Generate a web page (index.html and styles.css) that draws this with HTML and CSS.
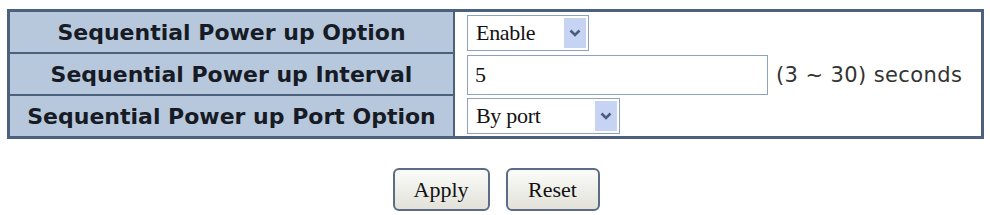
FILE: index.html
```
<!DOCTYPE html>
<html>
<head>
	<title>Sequential Power up</title>
	<link rel="stylesheet" href="styles.css">
</head>
<body>
	<!-- settings table -->
	<table class="config">
		<tr>
			<td class="label">Sequential Power up Option</td>
			<td class="value">
				<div class="combo combo-short">
					<span class="combo-text">Enable</span>
					<span class="combo-btn"><svg width="12" height="8" viewBox="0 0 12 8"><path d="M1.5 1.5 L6 6 L10.5 1.5" fill="none" stroke="#4a5d80" stroke-width="2.6"/></svg></span>
				</div>
			</td>
		</tr>
		<tr>
			<td class="label">Sequential Power up Interval</td>
			<td class="value">
				<div class="interval">
					<div class="textbox">5</div>
					<span class="unit">(3 ~ 30) seconds</span>
				</div>
			</td>
		</tr>
		<tr>
			<td class="label last">Sequential Power up Port Option</td>
			<td class="value">
				<div class="combo combo-long">
					<span class="combo-text">By port</span>
					<span class="combo-btn"><svg width="12" height="8" viewBox="0 0 12 8"><path d="M1.5 1.5 L6 6 L10.5 1.5" fill="none" stroke="#4a5d80" stroke-width="2.6"/></svg></span>
				</div>
			</td>
		</tr>
	</table>

	<!-- buttons -->
	<div class="actions">
		<button class="btn btn-apply">Apply</button>
		<button class="btn btn-reset">Reset</button>
	</div>
</body>
</html>
```

FILE: styles.css
```
body {
	margin: 0;
	background-color: white;
}

/* styles for the settings table */
.config {
	margin: 9px 6px 0 7px;
	width: 977px;
	border: 3px solid #4b617d;
	border-collapse: separate;
	border-spacing: 0;
}

.config td {
	padding: 0;
	height: 40px;
}

.label {
	width: 443px;
	background-color: #b8c8dc;
	border-right: 2px solid #4b617d;
	border-bottom: 2px solid #4b617d;
	text-align: center;
	font-family: "DejaVu Sans", Verdana, sans-serif;
	font-weight: bold;
	font-size: 22px;
	color: #161b26;
}

.label.last {
	border-bottom: none;
}

.value {
	padding-left: 12px !important;
	background-color: white;
}

/* fake drop down lists */
.combo {
	display: flex;
	align-items: stretch;
	height: 36px;
	border: 1px solid #8da2bd;
	box-sizing: border-box;
	padding: 2px;
	background-color: white;
}

.combo-short {
	width: 122px;
}

.combo-long {
	width: 153px;
}

.combo-text {
	flex: 1;
	display: flex;
	align-items: center;
	padding-left: 6px;
	font-family: "Liberation Serif", "Times New Roman", serif;
	font-size: 22px;
	letter-spacing: -0.3px;
	color: #111;
}

.combo-btn {
	width: 22px;
	display: flex;
	align-items: center;
	justify-content: center;
	background-color: #c6d3f2;
}

/* interval input */
.interval {
	display: flex;
	align-items: center;
}

.textbox {
	width: 301px;
	height: 40px;
	box-sizing: border-box;
	border: 1px solid #8da2bd;
	padding-left: 7px;
	display: flex;
	align-items: center;
	font-family: "Liberation Serif", "Times New Roman", serif;
	font-size: 22px;
	color: #111;
}

.unit {
	margin-left: 8px;
	font-family: "DejaVu Sans", Tahoma, sans-serif;
	font-size: 21px;
	letter-spacing: 0.4px;
	color: #333;
}

/* buttons */
.actions {
	display: flex;
	justify-content: center;
	gap: 16px;
	margin-top: 29px;
	padding-left: 2px;
}

.btn {
	height: 43px;
	border: 2px solid #5b6c84;
	border-radius: 6px;
	background: linear-gradient(#fbfbf8, #e2e2da);
	font-family: "Liberation Serif", "Times New Roman", serif;
	font-size: 22px;
	color: #111;
	padding: 0;
}

.btn-apply {
	width: 97px;
}

.btn-reset {
	width: 94px;
}
```
